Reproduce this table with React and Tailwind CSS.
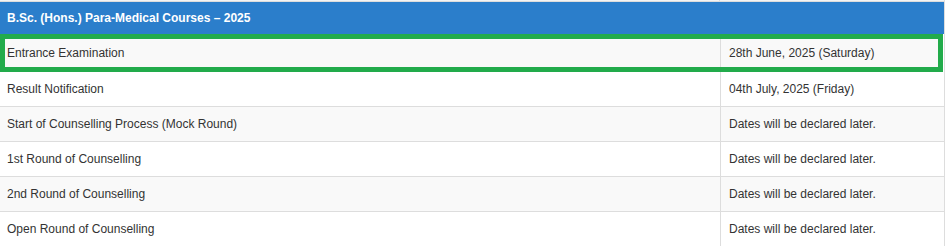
export default function App() {
  const rows = [
    ["Result Notification", "04th July, 2025 (Friday)", "bg-white"],
    ["Start of Counselling Process (Mock Round)", "Dates will be declared later.", "bg-[#f9f9f9]"],
    ["1st Round of Counselling", "Dates will be declared later.", "bg-white"],
    ["2nd Round of Counselling", "Dates will be declared later.", "bg-[#f9f9f9]"],
    ["Open Round of Counselling", "Dates will be declared later.", "bg-white"],
  ];
  return (
    <div className="w-[946px] h-[246px] bg-white overflow-hidden text-[12px] text-[#333] font-['Liberation_Sans',Arial,sans-serif]">
      <div className="w-[945px] border-r border-[#ddd]">
        <div className="flex h-[1px] bg-[#f4f4f4]">
          <div className="w-[720px] border-r border-[#ddd]"></div>
        </div>
        <div className="h-[1px] bg-[#ddd]"></div>
        <div className="h-[32px] bg-[#2b7ecb] flex items-center pl-[7px] font-bold text-white">
          B.Sc. (Hons.) Para-Medical Courses – 2025
        </div>
        <div className="flex h-[38px] border-[5px] border-[#22ab4b] bg-[#f9f9f9] w-[943px]">
          <div className="w-[716px] border-r border-[#ddd] flex items-center pl-[2px]">Entrance Examination</div>
          <div className="flex-1 flex items-center pl-[8px]">28th June, 2025 (Saturday)</div>
        </div>
        {rows.map(([a, b, bg], i) => (
          <div key={i} className={`flex h-[35px] border-b border-[#ddd] ${bg}`}>
            <div className="w-[721px] border-r border-[#ddd] flex items-center pl-[7px]">{a}</div>
            <div className="flex-1 flex items-center pl-[8px]">{b}</div>
          </div>
        ))}
      </div>
    </div>
  );
}
